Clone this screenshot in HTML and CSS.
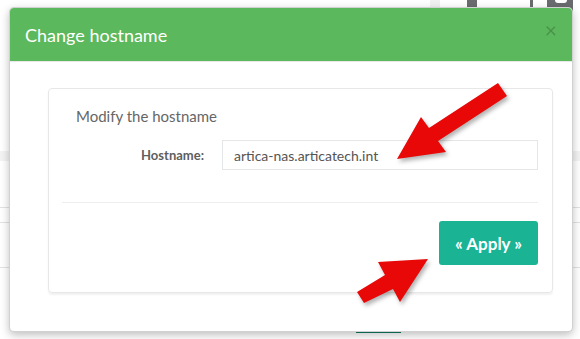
FILE: index.html
```html
<!DOCTYPE html>
<html lang="en">
<head>
  <meta charset="UTF-8">
  <title>Change hostname</title>
  <link rel="stylesheet" href="styles.css">
</head>
<body>
  <div class="page">

    <div class="bg">
      <div class="bg-top">
        <span class="tb tb-light"></span>
        <span class="tb tb-dark"></span>
        <span class="tb tb-thin"></span>
        <span class="tb tb-big"><i></i></span>
      </div>
      <div class="bg-band"></div>
      <div class="bg-line l1"></div>
      <div class="bg-line l2"></div>
      <div class="bg-line l3"></div>
      <div class="bg-btn"></div>
    </div>

    <div class="modal">
      <div class="modal-header">
        <h3>Change hostname</h3>
        <span class="close">&times;</span>
      </div>
      <div class="modal-body">
        <div class="panel">
          <p class="panel-title">Modify the hostname</p>
          <div class="form-row">
            <label for="hostname">Hostname:</label>
            <input id="hostname" value="artica-nas.articatech.int">
          </div>
          <hr>
          <div class="actions">
            <button class="apply-btn">&laquo; Apply &raquo;</button>
          </div>
        </div>
      </div>
    </div>

    <svg class="arrows" width="580" height="339" viewBox="0 0 580 339">
      <polygon points="498,83 429,128 421,117 397,159 446,152 438,141 507,96" />
      <polygon points="357,292 385,275 378,262 428,259 400,302 393,289 364,303" />
    </svg>

  </div>
</body>
</html>
```

FILE: styles.css
```css
body {
  margin: 0;
  font-family: Lato, "Open Sans", sans-serif;
  background: #fff;
}
.page {
  position: relative;
  width: 580px;
  height: 339px;
  overflow: hidden;
}

/* page behind the dialog */
.bg-top {
  display: flex;
  height: 58px;
  padding-left: 430px;
}
.tb {
  display: block;
}
.tb-light {
  width: 10px;
  height: 7px;
  background: #f0f0f0;
}
.tb-dark {
  width: 10px;
  height: 20px;
  margin-left: 27px;
  background: #6a6b6e;
}
.tb-thin {
  width: 3px;
  height: 20px;
  margin-left: 53px;
  background: #6a6b6e;
}
.tb-big {
  width: 26px;
  height: 58px;
  margin-left: 14px;
  background: #6a6b6e;
  border-radius: 0 0 4px 0;
}
.tb-big i {
  display: block;
  width: 12px;
  height: 3px;
  margin-left: 8px;
  background: #fff;
  border-radius: 0 0 4px 4px;
}
.bg-band {
  margin-top: 93px;
  height: 10px;
  background: #f3f3f3;
}
.bg-line {
  border-top: 1px solid #e2e2e2;
}
.l1 { margin-top: 46px; }
.l2 { margin-top: 14px; }
.l3 { margin-top: 44px; }
.bg-btn {
  margin: 63px 0 0 356px;
  width: 45px;
  height: 2px;
  background: #117a62;
}

/* dialog */
.modal {
  position: absolute;
  top: 7px;
  left: 9px;
  width: 562px;
  height: 323px;
  background: #fff;
  border: 1px solid rgba(0,0,0,0.18);
  border-radius: 5px;
  box-shadow: 0 3px 8px rgba(0,0,0,0.25);
  overflow: hidden;
}
.modal-header {
  display: flex;
  align-items: center;
  justify-content: space-between;
  height: 54px;
  padding: 0 15px;
  background: #5cb85c;
  border-bottom: 1px solid #e8e8e8;
  box-sizing: border-box;
}
.modal-header h3 {
  margin: 0;
  font-size: 18px;
  font-weight: normal;
  color: #fff;
}
.close {
  font-size: 21px;
  font-weight: normal;
  line-height: 1;
  color: #000;
  opacity: 0.2;
  margin-top: -10px;
}
.modal-body {
  padding: 26px 19px 38px 38px;
}

.panel {
  border: 1px solid #e7e7e7;
  border-radius: 4px;
  box-shadow: 0 2px 2px rgba(0,0,0,0.06);
  padding: 18px 14px 27px 13px;
}
.panel-title {
  margin: 0 0 15px 14px;
  font-size: 15px;
  color: #666;
}
.form-row {
  display: grid;
  grid-template-columns: 142px 1fr;
  gap: 18px;
  align-items: center;
}
.form-row label {
  text-align: right;
  font-size: 13px;
  font-weight: bold;
  color: #5e5e5e;
}
.form-row input {
  height: 30px;
  padding: 0 11px;
  border: 1px solid #e5e6e7;
  font-family: Lato, sans-serif;
  font-size: 14px;
  color: #555;
  box-sizing: border-box;
  outline: none;
}
hr {
  margin: 32px 0 18px;
  border: 0;
  border-top: 1px solid #eee;
}
.actions {
  display: flex;
  justify-content: flex-end;
}
.apply-btn {
  width: 99px;
  height: 44px;
  background: #1ab394;
  border: 0;
  border-radius: 3px;
  color: #fff;
  font-family: Lato, sans-serif;
  font-size: 17px;
  font-weight: bold;
  cursor: pointer;
}

.arrows {
  position: absolute;
  top: 0;
  left: 0;
  fill: #e80808;
  filter: drop-shadow(2px 3px 2px rgba(0,0,0,0.3));
}
```
